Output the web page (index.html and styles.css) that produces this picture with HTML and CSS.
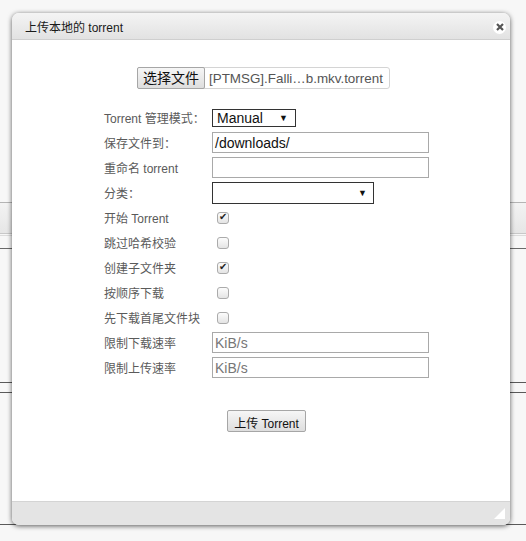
FILE: index.html
```html
<!DOCTYPE html>
<html lang="zh-CN">
<head>
    <meta charset="UTF-8">
    <title>上传本地的 torrent</title>
    <link rel="stylesheet" href="styles.css">
</head>
<body>
    <div class="desktop">
        <div class="line l1"></div>
        <div class="band"></div>
        <div class="line l2"></div>
        <div class="line l3"></div>
        <div class="line l4"></div>
        <div class="line l5"></div>
        <div class="line l6"></div>
        <div class="line l7"></div>
    </div>

    <div class="window">
        <div class="titlebar">
            <span class="title">上传本地的 torrent</span>
            <span class="close">
                <svg width="8" height="8" viewBox="0 0 8 8"><path d="M1 1 L7 7 M7 1 L1 7" stroke="#555" stroke-width="2.2"/></svg>
            </span>
        </div>
        <div class="content">
            <div class="filerow">
                <div class="filebox">
                    <span class="filebtn">选择文件</span>
                    <span class="filename">[PTMSG].Falli…b.mkv.torrent</span>
                </div>
            </div>
            <div class="form">
                <div class="label">Torrent 管理模式：</div>
                <div class="field"><span class="select small">Manual <i>▼</i></span></div>

                <div class="label">保存文件到：</div>
                <div class="field"><span class="input">/downloads/</span></div>

                <div class="label">重命名 torrent</div>
                <div class="field"><span class="input"></span></div>

                <div class="label">分类：</div>
                <div class="field"><span class="select wide"><i>▼</i></span></div>

                <div class="label">开始 Torrent</div>
                <div class="field"><span class="check on"></span></div>

                <div class="label">跳过哈希校验</div>
                <div class="field"><span class="check"></span></div>

                <div class="label">创建子文件夹</div>
                <div class="field"><span class="check on"></span></div>

                <div class="label">按顺序下载</div>
                <div class="field"><span class="check"></span></div>

                <div class="label">先下载首尾文件块</div>
                <div class="field"><span class="check"></span></div>

                <div class="label">限制下载速率</div>
                <div class="field"><span class="input placeholder">KiB/s</span></div>

                <div class="label">限制上传速率</div>
                <div class="field"><span class="input placeholder">KiB/s</span></div>
            </div>
            <div class="submit">
                <span class="button">上传 Torrent</span>
            </div>
        </div>
        <div class="footer">
            <svg width="11" height="11" viewBox="0 0 11 11"><path d="M11 0 L11 11 L0 11 Z" fill="#fff"/></svg>
        </div>
    </div>
</body>
</html>
```

FILE: styles.css
```css
body {
    margin: 0;
    background: #f7f7f7;
    font-family: "Liberation Sans", "Noto Sans CJK SC", sans-serif;
    font-size: 12px;
    color: #333;
    width: 526px;
    height: 541px;
    overflow: hidden;
}
.desktop {
    position: relative;
    width: 526px;
    height: 541px;
}
.line {
    position: absolute;
    left: 0;
    right: 0;
    height: 1px;
}
.l1 { top: 202px; background: #b4b4b4; }
.band {
    position: absolute;
    left: 0;
    right: 0;
    top: 203px;
    height: 30px;
    background: linear-gradient(#f3f3f3, #e6e6e6);
}
.l2 { top: 233px; background: #c8c8c8; }
.l3 { top: 235px; background: #dcdcdc; }
.l4 { top: 248px; background: #6a6a6a; }
.l5 { top: 382px; background: #5a5a5a; }
.l6 { top: 392px; background: #5a5a5a; }
.l7 { top: 524px; background: #5a5a5a; }

.window {
    position: absolute;
    left: 12px;
    top: 13px;
    width: 498px;
    height: 512px;
    display: flex;
    flex-direction: column;
    background: #fff;
    border-radius: 7px;
    box-shadow: 0 1px 5px rgba(0, 0, 0, 0.65);
    overflow: hidden;
}
.titlebar {
    height: 26px;
    flex: none;
    display: flex;
    align-items: center;
    justify-content: space-between;
    padding: 0 4px 0 13px;
    background: linear-gradient(#f4f4f4, #e2e2e2);
    border-bottom: 1px solid #cfcfcf;
}
.title {
    font-size: 12px;
    color: #1a1a1a;
    padding-top: 1px;
}
.close {
    width: 13px;
    height: 13px;
    border-radius: 50%;
    background: #fff;
    display: flex;
    align-items: center;
    justify-content: center;
    margin-top: 2px;
}
.content {
    flex: 1;
}
.filerow {
    padding: 27px 0 0 125px;
}
.filebox {
    display: inline-flex;
    align-items: center;
    width: 253px;
    height: 22px;
    border: 1px solid #d4d4d4;
    border-radius: 3px;
    box-sizing: border-box;
    white-space: nowrap;
}
.filebtn {
    flex: none;
    width: 68px;
    height: 22px;
    box-sizing: border-box;
    margin: 0 0 0 -1px;
    padding-top: 1px;
    text-align: center;
    font-size: 14px;
    line-height: 18px;
    color: #111;
    border: 1px solid #a6a6a6;
    border-radius: 2px;
    background: linear-gradient(#f6f6f6, #dedede);
}
.filename {
    font-size: 13.4px;
    color: #555;
    padding-left: 4px;
}
.form {
    margin: 16px 0 0 92px;
    display: grid;
    grid-template-columns: 108px 217px;
    grid-auto-rows: 25px;
    align-items: center;
}
.label {
    color: #5a5a5a;
    font-size: 12px;
}
.field {
    display: flex;
    align-items: center;
}
.input {
    width: 217px;
    height: 21px;
    box-sizing: border-box;
    border: 1px solid #a9a9a9;
    padding: 1px 2px 0;
    font-size: 14px;
    color: #111;
    line-height: 18px;
}
.input.placeholder {
    color: #777;
}
.select {
    height: 18px;
    box-sizing: border-box;
    border: 1px solid #333;
    display: flex;
    align-items: center;
    justify-content: space-between;
    padding: 0 7px 0 4px;
    font-size: 14px;
    color: #111;
}
.select i {
    font-style: normal;
    font-size: 9px;
}
.select.small {
    width: 84px;
}
.select.wide {
    width: 162px;
    height: 22px;
    justify-content: flex-end;
    padding-right: 6px;
}
.check {
    width: 12px;
    height: 12px;
    margin-left: 5px;
    box-sizing: border-box;
    border: 1px solid #ababab;
    border-radius: 3px;
    background: linear-gradient(#fcfcfc, #e4e4e4);
    position: relative;
}
.check.on::after {
    content: "✔";
    position: absolute;
    left: 1px;
    top: -2px;
    font-family: "DejaVu Sans", sans-serif;
    font-size: 10px;
    color: #222;
}
.submit {
    margin: 30px 0 0 92px;
    width: 325px;
    display: flex;
    justify-content: center;
}
.button {
    height: 22px;
    box-sizing: border-box;
    padding: 3px 6px 0;
    font-size: 12px;
    color: #111;
    border: 1px solid #a6a6a6;
    border-radius: 2px;
    background: linear-gradient(#f6f6f6, #dedede);
}
.footer {
    height: 24px;
    flex: none;
    background: #e4e4e4;
    border-top: 1px solid #d4d4d4;
    display: flex;
    align-items: flex-end;
    justify-content: flex-end;
    padding: 0 5px 6px 0;
    box-sizing: border-box;
}
```
